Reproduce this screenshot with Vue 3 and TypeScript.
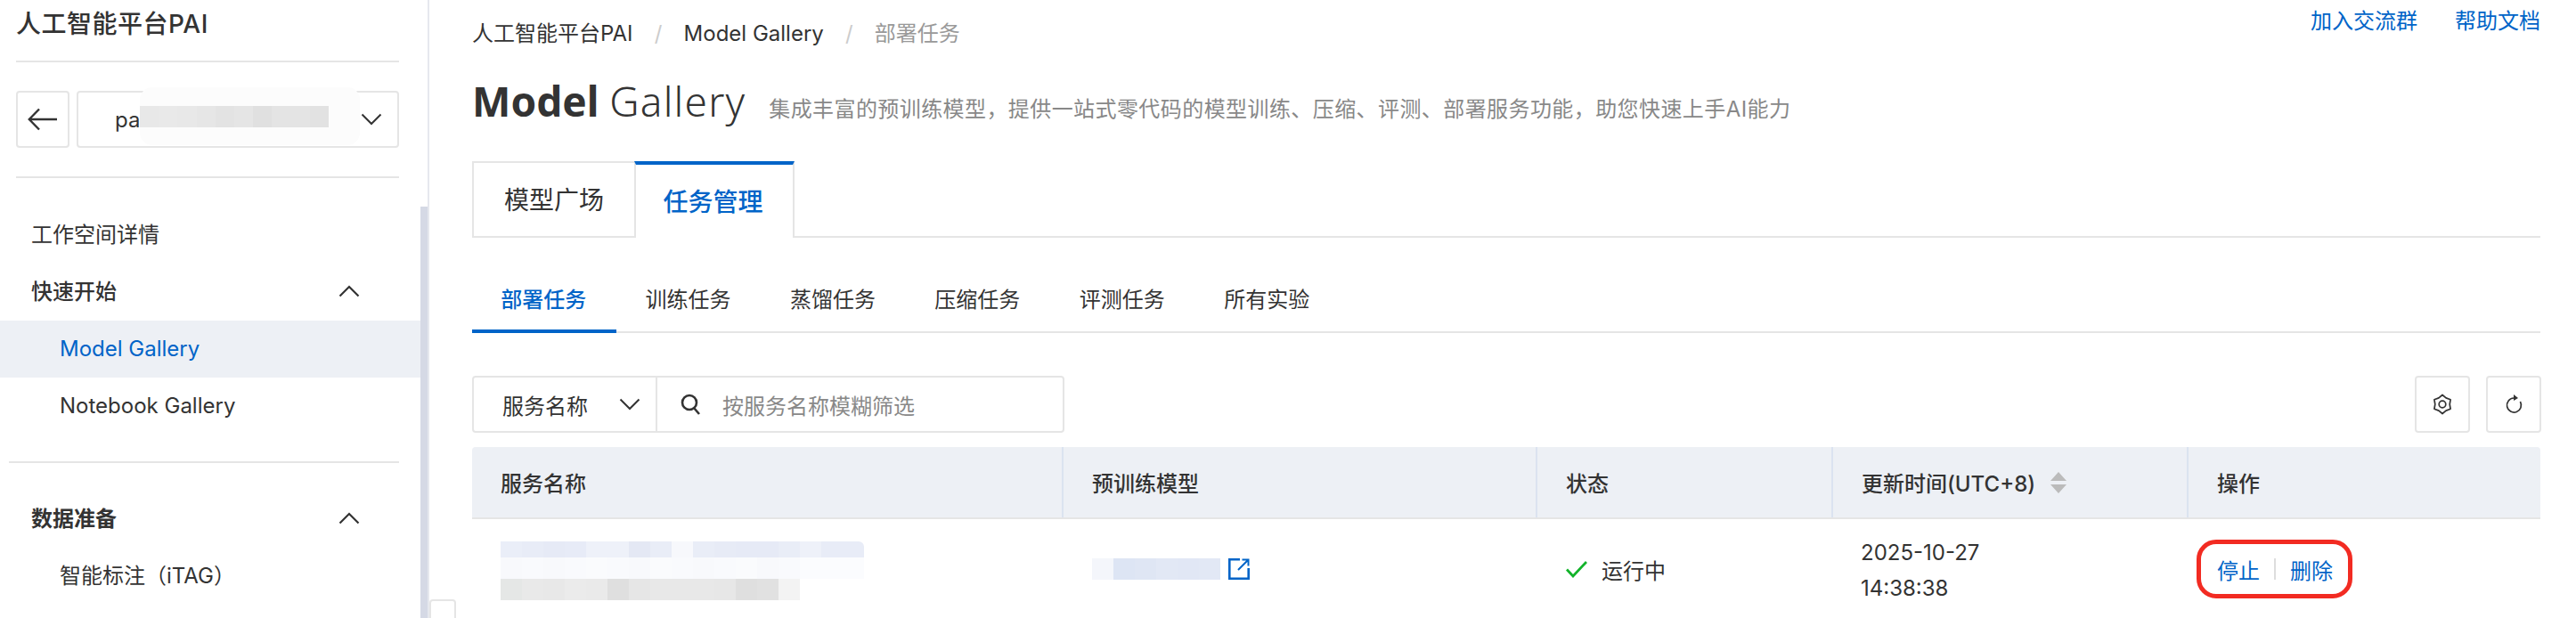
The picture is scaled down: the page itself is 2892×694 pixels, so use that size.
<script setup lang="ts">
type BlurRow = {
  height: number;
  cells: string[];
};

const subTabs = ['部署任务', '训练任务', '蒸馏任务', '压缩任务', '评测任务', '所有实验'];

const columns = ['服务名称', '预训练模型', '状态', '更新时间(UTC+8)', '操作'];

const selectBlur = ['#e8e8e8', '#e9e9e9', '#e8e8e8', '#e6e6e6', '#e3e3e3', '#e5e5e5', '#e0e0e0', '#e4e4e4', '#e4e4e4', '#e2e2e2'];

const nameBlur: BlurRow[] = [
  {
    height: 18,
    cells: ['#eaeef8', '#e8ecf7', '#e6eaf6', '#e7ebf7', '#eef1f9', '#eef1f9', '#e4e8f4', '#e9edf7', '#f7f8fc', '#e9edf7', '#e7ebf6', '#e6eaf6', '#e6eaf6', '#e9edf7', '#eef1f9', '#e8ecf7', '#e8ecf7'],
  },
  {
    height: 24,
    cells: ['#f8f9fc', '#f9fafd', '#f8f9fc', '#f9fafd', '#fafbfd', '#f9fafd', '#f8f9fc', '#fafbfd', '#f9fafd', '#f8f9fc', '#f9fafd', '#fafbfd', '#f8f9fc', '#f9fafd', '#fbfcfe', '#fbfcfe', '#fbfcfe'],
  },
  {
    height: 24,
    cells: ['#e5e7e6', '#e9e9e9', '#e8e8e8', '#ebebeb', '#eaeaea', '#dfdfdf', '#e6e6e6', '#e8e8e8', '#e8e8e8', '#e8e8e8', '#e7e7e7', '#dfdfdf', '#e1e1e1', '#f3f3f3'],
  },
];

const modelBlur = ['#f4f6fb', '#dde5f4', '#dfe6f4', '#e2e8f5', '#e1e7f5', '#e2e8f5'];

const gearPath = (() => {
  const pts: string[] = [];
  for (let i = 0; i < 12; i++) {
    const r = i % 2 === 0 ? 10.5 : 8.2;
    const a = (Math.PI / 6) * i - Math.PI / 2;
    pts.push(`${(12 + r * Math.cos(a)).toFixed(2)} ${(12 + r * Math.sin(a)).toFixed(2)}`);
  }
  return `M${pts.join('L')}Z`;
})();
</script>

<template>
  <div class="page">
    <aside class="sidebar">
      <div class="side-title">人工智能平台PAI</div>

      <div class="switcher">
        <button class="back-btn">
          <svg width="34" height="26" viewBox="0 0 34 26" fill="none" stroke="#333" stroke-width="2.4">
            <path d="M33 13H2M13 1.5L1.8 13 13 24.5" />
          </svg>
        </button>
        <div class="ws-select">
          <span class="ws-name">pa</span>
          <svg class="ws-arrow" width="24" height="14" viewBox="0 0 24 14" fill="none" stroke="#333" stroke-width="2">
            <path d="M1.5 1.5L12 12 22.5 1.5" />
          </svg>
          <div class="ws-blur">
            <span v-for="(c, i) in selectBlur" :key="i" class="ws-cell" :style="{ background: c }"></span>
          </div>
        </div>
      </div>

      <nav class="nav">
        <div class="nav-group">工作空间详情</div>
        <div class="nav-group strong">
          快速开始
          <svg class="fold" width="24" height="14" viewBox="0 0 24 14" fill="none" stroke="#333" stroke-width="2.2">
            <path d="M1.5 12.5L12 2 22.5 12.5" />
          </svg>
        </div>
        <div class="nav-item active">Model Gallery</div>
        <div class="nav-item">Notebook Gallery</div>
        <div class="nav-line"></div>
        <div class="nav-group strong bold">
          数据准备
          <svg class="fold" width="24" height="14" viewBox="0 0 24 14" fill="none" stroke="#333" stroke-width="2.2">
            <path d="M1.5 12.5L12 2 22.5 12.5" />
          </svg>
        </div>
        <div class="nav-item">智能标注（iTAG）</div>
      </nav>

      <div class="scroll-thumb"></div>
    </aside>
    <div class="collapse-btn"></div>

    <main class="content">
      <div class="top-row">
        <div class="crumbs">
          <span>人工智能平台PAI</span>
          <i>/</i>
          <span>Model Gallery</span>
          <i>/</i>
          <span class="muted">部署任务</span>
        </div>
        <div class="links">
          <a>加入交流群</a>
          <a>帮助文档</a>
        </div>
      </div>

      <div class="title-row">
        <h1><b>Model</b> <span>Gallery</span></h1>
        <p>集成丰富的预训练模型，提供一站式零代码的模型训练、压缩、评测、部署服务功能，助您快速上手AI能力</p>
      </div>

      <div class="tabs">
        <div class="tab">模型广场</div>
        <div class="tab current">任务管理</div>
      </div>

      <div class="sub-tabs">
        <div v-for="(t, i) in subTabs" :key="t" class="sub-tab" :class="{ on: i === 0 }">{{ t }}</div>
      </div>

      <div class="toolbar">
        <div class="search">
          <div class="search-field">
            服务名称
            <svg width="24" height="14" viewBox="0 0 24 14" fill="none" stroke="#333" stroke-width="2">
              <path d="M1.5 1.5L12 12 22.5 1.5" />
            </svg>
          </div>
          <div class="search-input">
            <svg width="24" height="26" viewBox="0 0 24 26" fill="none" stroke="#333" stroke-width="2.6">
              <circle cx="11" cy="11" r="8" />
              <path d="M16 17L22 24" />
            </svg>
            <span>按服务名称模糊筛选</span>
          </div>
        </div>
        <div class="tools">
          <button class="tool-btn">
            <svg width="24" height="24" viewBox="0 0 24 24" fill="none" stroke="#333" stroke-width="1.7" stroke-linejoin="round">
              <path :d="gearPath" />
              <circle cx="12" cy="12" r="3.8" />
            </svg>
          </button>
          <button class="tool-btn">
            <svg width="24" height="24" viewBox="0 0 24 24" fill="none" stroke="#333" stroke-width="1.7">
              <path d="M12 5A8 8 0 1 0 19.4 9" />
              <path d="M12 1L17 5 12 8Z" fill="#333" stroke="none" />
            </svg>
          </button>
        </div>
      </div>

      <div class="table">
        <div class="thead">
          <div v-for="c in columns" :key="c" class="th">
            {{ c }}
            <svg v-if="c.startsWith('更新')" class="sort" width="18" height="24" viewBox="0 0 18 24" fill="#bbb">
              <path d="M9 0L18 10H0ZM9 24L0 14H18Z" />
            </svg>
          </div>
        </div>
        <div class="tbody">
          <div class="td name-cell">
            <div v-for="(row, r) in nameBlur" :key="r" class="blur-row" :style="{ height: row.height + 'px' }">
              <span v-for="(c, i) in row.cells" :key="i" class="blur-cell" :style="{ background: c }"></span>
            </div>
          </div>
          <div class="td model-cell">
            <div class="model-blur">
              <span v-for="(c, i) in modelBlur" :key="i" class="model-cell-block" :style="{ background: c }"></span>
            </div>
            <svg width="24" height="24" viewBox="0 0 24 24" fill="none" stroke="#0064c8" stroke-width="2.6">
              <path d="M13 1.3H1.3V22.7H22.7V11" />
              <path d="M11 13L22 2M15.5 1.5H22.5V8.5" stroke-width="2" />
            </svg>
          </div>
          <div class="td status-cell">
            <svg width="24" height="19" viewBox="0 0 24 19" fill="none" stroke="#12b32a" stroke-width="2.8">
              <path d="M1 9.5L8 17 23 1" />
            </svg>
            运行中
          </div>
          <div class="td time-cell">
            <div>2025-10-27</div>
            <div>14:38:38</div>
          </div>
          <div class="td ops-cell">
            <div class="ops">
              <a>停止</a>
              <span class="ops-sep"></span>
              <a>删除</a>
            </div>
          </div>
        </div>
      </div>
    </main>
  </div>
</template>

<style>
html,
body {
  margin: 0;
  background: #fff;
  overflow: hidden;
}
</style>

<style scoped>
.page {
  position: relative;
  display: flex;
  width: 2892px;
  height: 694px;
  overflow: hidden;
  font-family: Inter, "Noto Sans CJK SC", sans-serif;
  font-size: 24px;
  color: #333;
  background: #fff;
}

.sidebar {
  position: relative;
  flex: none;
  width: 480px;
  height: 694px;
  border-right: 2px solid #e6e8ee;
  overflow: hidden;
}

.side-title {
  height: 54px;
  line-height: 54px;
  padding-bottom: 14px;
  margin: 0 32px 0 18px;
  border-bottom: 2px solid #e5e5e5;
  font-size: 28px;
  font-weight: 500;
  letter-spacing: 0.5px;
}

.switcher {
  display: flex;
  gap: 8px;
  margin: 0 32px 0 18px;
  padding: 32px 0;
  border-bottom: 2px solid #e5e5e5;
}

.back-btn {
  display: flex;
  align-items: center;
  justify-content: center;
  width: 60px;
  height: 64px;
  padding: 0;
  background: #fff;
  border: 2px solid #e5e5e5;
  border-radius: 4px;
}

.ws-select {
  position: relative;
  flex: 1;
  display: flex;
  align-items: center;
  justify-content: space-between;
  height: 64px;
  padding: 0 17px 0 41px;
  box-sizing: border-box;
  border: 2px solid #e5e5e5;
  border-radius: 4px;
  font-size: 24px;
}

.ws-blur {
  position: absolute;
  left: 69px;
  top: -6px;
  display: flex;
  align-items: center;
  width: 247px;
  height: 65px;
  background: #fcfcfc;
  border-radius: 14px;
}

.ws-cell {
  width: 21.2px;
  height: 24px;
}

.nav {
  padding-top: 32px;
}

.nav-group {
  position: relative;
  height: 64px;
  line-height: 64px;
  padding-left: 35px;
}

.strong {
  font-weight: 500;
}

.bold {
  font-weight: 700;
}

.fold {
  position: absolute;
  left: 380px;
  top: 24px;
}

.nav-item {
  height: 64px;
  line-height: 64px;
  padding-left: 67px;
  width: 405px;
}

.nav-item.active {
  color: #0064c8;
  background: #edf0f5;
}

.nav-line {
  height: 2px;
  width: 438px;
  margin: 30px 0 31px 10px;
  background: #e5e5e5;
}

.scroll-thumb {
  position: absolute;
  left: 472px;
  top: 232px;
  width: 8px;
  height: 462px;
  background: #d5d9e5;
}

.collapse-btn {
  position: absolute;
  left: 482px;
  top: 673px;
  width: 30px;
  height: 30px;
  box-sizing: border-box;
  border: 2px solid #e5e5e5;
  border-radius: 4px;
  background: #fff;
}

.content {
  flex: 1;
  min-width: 0;
  padding: 0 40px 0 48px;
}

.top-row {
  display: flex;
  justify-content: space-between;
  height: 74px;
}

.crumbs {
  display: flex;
  gap: 0;
  line-height: 76px;
  white-space: nowrap;
}

.crumbs i {
  width: 57px;
  text-align: center;
  font-style: normal;
  color: #ccc;
}

.muted {
  color: #999;
}

.links {
  display: flex;
  gap: 42px;
  line-height: 48px;
}

.links a {
  color: #0064c8;
}

.title-row {
  display: flex;
  align-items: baseline;
  gap: 26px;
  height: 107px;
  white-space: nowrap;
}

.title-row h1 {
  margin: 0;
  font-family: "Noto Sans", "Noto Sans CJK SC", sans-serif;
  font-size: 46px;
  line-height: 78px;
  font-weight: 300;
}

.title-row h1 b {
  font-weight: 700;
}

.title-row h1 span {
  letter-spacing: 1.2px;
}

.title-row p {
  margin: 0;
  color: #888;
  letter-spacing: 0.42px;
}

.tabs {
  display: flex;
  height: 86px;
  box-sizing: border-box;
  border-bottom: 2px solid #e5e5e5;
}

.tab {
  width: 182px;
  height: 86px;
  line-height: 84px;
  box-sizing: border-box;
  text-align: center;
  font-size: 28px;
  border: 2px solid #e5e5e5;
  border-right: 0;
  background: #fff;
}

.tab.current {
  width: 180px;
  height: 86px;
  padding-right: 3px;
  color: #0064c8;
  font-weight: 500;
  border: 2px solid #e5e5e5;
  border-top: 4px solid #0064c8;
  border-bottom: 0;
}

.sub-tabs {
  display: flex;
  margin-top: 33px;
  border-bottom: 2px solid #e5e5e5;
}

.sub-tab {
  width: 162.4px;
  height: 72px;
  padding-right: 2px;
  box-sizing: border-box;
  line-height: 74px;
  text-align: center;
}

.sub-tab.on {
  color: #0064c8;
  font-weight: 500;
  height: 74px;
  margin-bottom: -2px;
  border-bottom: 4px solid #0064c8;
}

.toolbar {
  display: flex;
  justify-content: space-between;
  margin-top: 48px;
}

.search {
  display: flex;
  width: 665px;
  height: 64px;
  box-sizing: border-box;
  border: 2px solid #e5e5e5;
  border-radius: 4px;
}

.search-field {
  display: flex;
  align-items: center;
  justify-content: space-between;
  width: 206px;
  padding: 0 17px 0 32px;
  box-sizing: border-box;
  border-right: 2px solid #e5e5e5;
}

.search-input {
  display: flex;
  align-items: center;
  gap: 24px;
  padding-left: 25px;
  color: #888;
}

.tools {
  display: flex;
  gap: 18px;
  margin-right: -1px;
}

.tool-btn {
  display: flex;
  align-items: center;
  justify-content: center;
  width: 62px;
  height: 64px;
  padding: 0;
  background: #fff;
  border: 2px solid #e5e5e5;
  border-radius: 4px;
}

.table {
  margin-top: 16px;
}

.thead,
.tbody {
  display: grid;
  grid-template-columns: 662px 532px 332px 399px 397px;
}

.thead {
  height: 81px;
  box-sizing: border-box;
  background: #edf0f5;
  border-bottom: 2px solid #e5e5e5;
  border-radius: 4px 4px 0 0;
}

.th {
  position: relative;
  display: flex;
  align-items: center;
  padding-left: 32px;
  font-weight: 500;
  border-left: 2px solid #dbe3f0;
  box-sizing: border-box;
  white-space: nowrap;
}

.th:first-child {
  border-left: 0;
}

.sort {
  margin-left: 17px;
}

.tbody {
  height: 112px;
}

.td {
  display: flex;
  align-items: center;
  padding-left: 33px;
  box-sizing: border-box;
}

.name-cell {
  flex-direction: column;
  align-items: flex-start;
  justify-content: flex-start;
  padding: 25px 0 0 32px;
}

.blur-row {
  display: flex;
  width: 408px;
  overflow: hidden;
}

.blur-row:first-child {
  border-top-right-radius: 6px;
}

.blur-cell {
  flex: none;
  width: 24px;
}

.model-cell {
  gap: 9px;
  align-items: flex-start;
  padding: 44px 0 0 34px;
}

.model-blur {
  display: flex;
  width: 144px;
  height: 24px;
}

.model-cell-block {
  flex: 1;
}

.status-cell {
  gap: 16px;
  padding-left: 34px;
}

.time-cell {
  flex-direction: column;
  align-items: flex-start;
  justify-content: center;
  line-height: 40px;
  padding-left: 33px;
  padding-top: 4px;
}

.ops-cell {
  padding-left: 11px;
}

.ops {
  display: flex;
  align-items: center;
  gap: 16px;
  height: 66px;
  padding: 0 17px 0 18px;
  box-sizing: border-box;
  border: 5px solid #f22b22;
  border-radius: 22px;
  color: #0064c8;
}

.ops-sep {
  width: 2px;
  height: 24px;
  background: #ddd;
}
</style>
